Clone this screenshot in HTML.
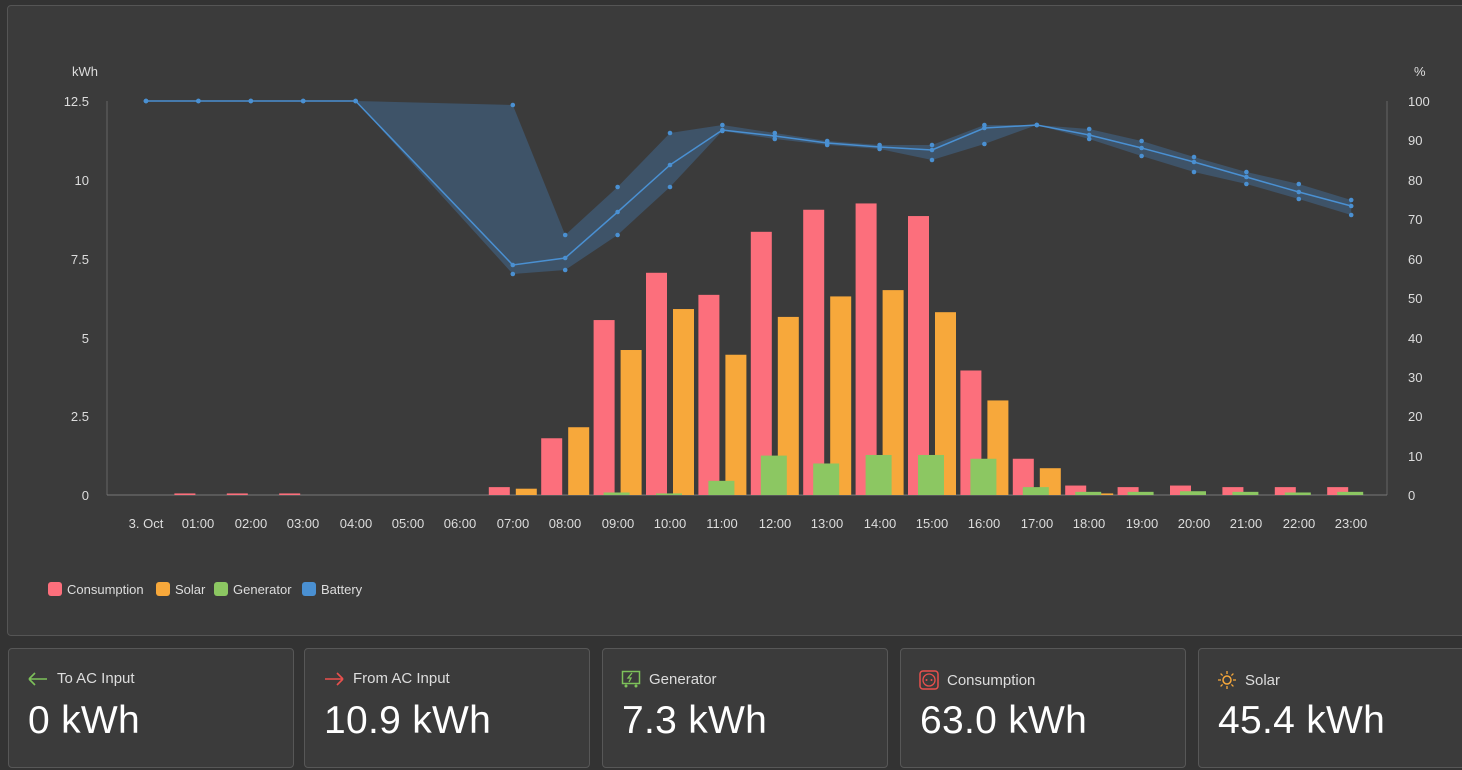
<!DOCTYPE html>
<html><head><meta charset="utf-8"><style>
body{margin:0;width:1462px;height:770px;background:#333333;font-family:"Liberation Sans",sans-serif;overflow:hidden;position:relative}
.panel{position:absolute;left:7px;top:5px;width:1460px;height:631px;background:#3b3b3b;border:1px solid #555;border-radius:4px;box-sizing:border-box}
.card{position:absolute;top:648px;height:120px;width:286px;background:#3b3b3b;border:1px solid #575757;border-radius:4px;box-sizing:border-box}
.card .t{position:absolute;left:18px;top:21px;font-size:15px;color:#ddd;display:flex;align-items:center;gap:8px}
.card .v{position:absolute;left:19px;top:50px;font-size:39px;color:#fff;letter-spacing:0.3px}
svg text{font-family:"Liberation Sans",sans-serif;fill:#ddd;font-size:13px}
</style></head><body>
<div class="panel"></div>
<svg id="c" width="1462" height="640" style="position:absolute;left:0;top:0">
<line x1="107" y1="101" x2="107" y2="495" stroke="#666"/>
<line x1="1387" y1="101" x2="1387" y2="495" stroke="#666"/>
<line x1="107" y1="495" x2="1387" y2="495" stroke="#777"/>
<text x="72" y="76">kWh</text><text x="1414" y="76">%</text>
<g text-anchor="end">
<text x="89" y="106">12.5</text><text x="89" y="185">10</text><text x="89" y="264">7.5</text><text x="89" y="343">5</text><text x="89" y="421">2.5</text><text x="89" y="500">0</text>
</g>
<g text-anchor="start">
<text x="1408" y="106">100</text><text x="1408" y="145">90</text><text x="1408" y="185">80</text><text x="1408" y="224">70</text><text x="1408" y="264">60</text><text x="1408" y="303">50</text><text x="1408" y="343">40</text><text x="1408" y="382">30</text><text x="1408" y="421">20</text><text x="1408" y="461">10</text><text x="1408" y="500">0</text>
</g>
<g text-anchor="middle">
<text x="146" y="528">3. Oct</text><text x="198" y="528">01:00</text><text x="251" y="528">02:00</text><text x="303" y="528">03:00</text><text x="356" y="528">04:00</text><text x="408" y="528">05:00</text><text x="460" y="528">06:00</text><text x="513" y="528">07:00</text><text x="565" y="528">08:00</text><text x="618" y="528">09:00</text><text x="670" y="528">10:00</text><text x="722" y="528">11:00</text><text x="775" y="528">12:00</text><text x="827" y="528">13:00</text><text x="880" y="528">14:00</text><text x="932" y="528">15:00</text><text x="984" y="528">16:00</text><text x="1037" y="528">17:00</text><text x="1089" y="528">18:00</text><text x="1142" y="528">19:00</text><text x="1194" y="528">20:00</text><text x="1246" y="528">21:00</text><text x="1299" y="528">22:00</text><text x="1351" y="528">23:00</text>
</g>
<rect x="48" y="582" width="14" height="14" rx="3" fill="#fc6f7c"/><text x="67" y="594">Consumption</text>
<rect x="156" y="582" width="14" height="14" rx="3" fill="#f7a83b"/><text x="175" y="594">Solar</text>
<rect x="214" y="582" width="14" height="14" rx="3" fill="#8cc762"/><text x="233" y="594">Generator</text>
<rect x="302" y="582" width="14" height="14" rx="3" fill="#4a90d2"/><text x="321" y="594">Battery</text>
<g id="g"></g>
</svg>
<div class="card" style="left:8px"><div class="t"><svg width="22" height="14"><path d="M2 7H20M2 7L8 1M2 7L8 13" stroke="#7dc15a" stroke-width="1.6" fill="none"/></svg>To AC Input</div><div class="v">0 kWh</div></div>
<div class="card" style="left:304px"><div class="t"><svg width="22" height="14"><path d="M2 7H20M20 7L14 1M20 7L14 13" stroke="#e9504d" stroke-width="1.6" fill="none"/></svg>From AC Input</div><div class="v">10.9 kWh</div></div>
<div class="card" style="left:602px"><div class="t"><svg width="20" height="18"><rect x="1.5" y="1.5" width="17" height="12" fill="none" stroke="#7dc15a" stroke-width="1.5"/><path d="M11 3L7 8H10L8 12" stroke="#7dc15a" fill="none" stroke-width="1.3"/><circle cx="5" cy="16" r="1.5" fill="#7dc15a"/><circle cx="15" cy="16" r="1.5" fill="#7dc15a"/></svg>Generator</div><div class="v">7.3 kWh</div></div>
<div class="card" style="left:900px"><div class="t"><svg width="20" height="20"><rect x="1" y="1" width="18" height="18" rx="3" fill="none" stroke="#e9504d" stroke-width="1.5"/><circle cx="10" cy="10" r="6" fill="none" stroke="#e9504d" stroke-width="1.3"/><circle cx="7.5" cy="10" r="1" fill="#e9504d"/><circle cx="12.5" cy="10" r="1" fill="#e9504d"/></svg>Consumption</div><div class="v">63.0 kWh</div></div>
<div class="card" style="left:1198px;width:280px"><div class="t"><svg width="20" height="20"><circle cx="10" cy="10" r="4" fill="none" stroke="#f7a83b" stroke-width="1.5"/><path d="M10 1V4M10 16V19M1 10H4M16 10H19M3.6 3.6L5.6 5.6M14.4 14.4L16.4 16.4M3.6 16.4L5.6 14.4M14.4 5.6L16.4 3.6" stroke="#f7a83b" stroke-width="1.3"/></svg>Solar</div><div class="v">45.4 kWh</div></div>
<script>
var g=document.getElementById('g'),s='';
function X(h){return 146+52.4*h}
function Y(v){return 495-v*31.52}
var C=[0,.05,.05,.05,0,0,0,.25,1.8,5.55,7.05,6.35,8.35,9.05,9.25,8.85,3.95,1.15,.3,.25,.3,.25,.25,.25];
var S=[0,0,0,0,0,0,0,.2,2.15,4.6,5.9,4.45,5.65,6.3,6.5,5.8,3.0,.85,.05,0,0,0,0,0];
var G=[0,0,0,0,0,0,0,0,0,.08,.05,.45,1.25,1.0,1.27,1.27,1.15,.25,.1,.1,.12,.1,.08,.1];
var up={0:101,1:101,2:101,3:101,4:101,7:105,8:235,9:187,10:133,11:125,12:133,13:141,14:145,15:145,16:125,17:125,18:129,19:141,20:157,21:172,22:184,23:200};
var mid={0:101,1:101,2:101,3:101,4:101,7:265,8:258,9:212,10:165,11:130,12:136,13:143,14:147,15:150,16:128,17:125,18:135,19:148,20:162,21:177,22:192,23:206};
var lo={0:101,1:101,2:101,3:101,4:101,7:274,8:270,9:235,10:187,11:131,12:139,13:145,14:149,15:160,16:144,17:125,18:139,19:156,20:172,21:184,22:199,23:215};
var ks=[0,1,2,3,4,7,8,9,10,11,12,13,14,15,16,17,18,19,20,21,22,23];
var p='';ks.forEach(function(k){p+=X(k)+','+up[k]+' '});ks.slice().reverse().forEach(function(k){p+=X(k)+','+lo[k]+' '});
s+='<polygon points="'+p+'" fill="#3e5368"/>';
var l='';ks.forEach(function(k){l+=X(k)+','+mid[k]+' '});
s+='<polyline points="'+l+'" fill="none" stroke="#4a90d2" stroke-width="1.5"/>';
for(var h=0;h<24;h++){var x=X(h);
if(C[h])s+='<rect x="'+(x-24)+'" y="'+Y(C[h])+'" width="21" height="'+(C[h]*31.52)+'" fill="#fc6f7c"/>';
if(S[h])s+='<rect x="'+(x+3)+'" y="'+Y(S[h])+'" width="21" height="'+(S[h]*31.52)+'" fill="#f7a83b"/>';
if(G[h])s+='<rect x="'+(x-14)+'" y="'+Y(G[h])+'" width="26" height="'+(G[h]*31.52)+'" fill="#8cc762"/>';}
ks.forEach(function(k){[up[k],mid[k],lo[k]].forEach(function(y){s+='<circle cx="'+X(k)+'" cy="'+y+'" r="2.3" fill="#4a90d2"/>'})});
g.innerHTML=s;
</script>
</body></html>
